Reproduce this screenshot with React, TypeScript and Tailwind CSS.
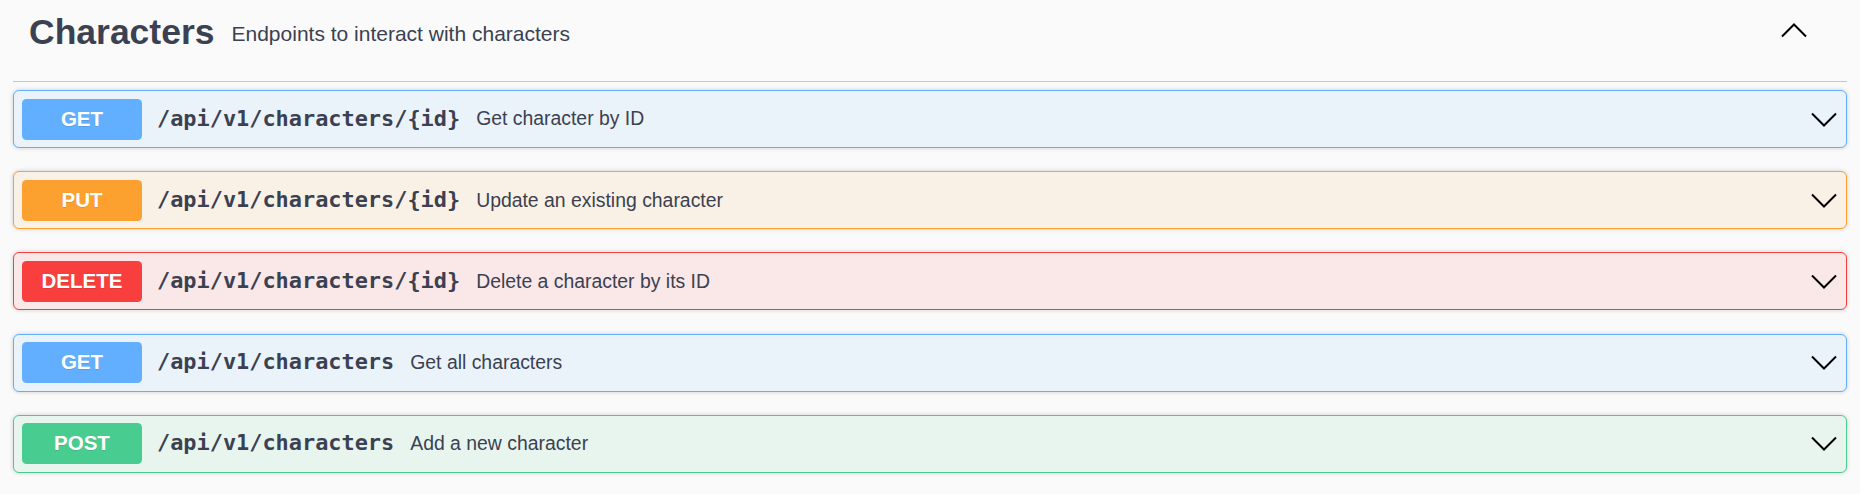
const endpoints = [
  { method: "GET", path: "/api/v1/characters/{id}", summary: "Get character by ID", kind: "get" },
  { method: "PUT", path: "/api/v1/characters/{id}", summary: "Update an existing character", kind: "put" },
  { method: "DELETE", path: "/api/v1/characters/{id}", summary: "Delete a character by its ID", kind: "delete" },
  { method: "GET", path: "/api/v1/characters", summary: "Get all characters", kind: "get" },
  { method: "POST", path: "/api/v1/characters", summary: "Add a new character", kind: "post" },
] as const;

const styles = {
  get: { block: "bg-[#ebf3fa] border-[#61affe]", badge: "bg-[#61affe]" },
  put: { block: "bg-[#faf1e6] border-[#fca130]", badge: "bg-[#fca130]" },
  delete: { block: "bg-[#fae7e7] border-[#f93e3e]", badge: "bg-[#f93e3e]" },
  post: { block: "bg-[#e8f5ef] border-[#49cc90]", badge: "bg-[#49cc90]" },
};

function Chevron({ up = false }: { up?: boolean }) {
  return (
    <svg width="26" height="15" viewBox="0 0 26 15" fill="none">
      <path
        d={up ? "M1 13.5 L13 1.5 L25 13.5" : "M1 1.5 L13 13.5 L25 1.5"}
        stroke="#000"
        strokeWidth="2"
      />
    </svg>
  );
}

export default function App() {
  return (
    <div className="min-h-[494px] w-full bg-[#fafafa] px-[13px] font-['Liberation_Sans',Arial,sans-serif] text-[#3b4151]">
      <div className="flex h-[82px] items-start border-b border-[#c4c6cb] pb-[15px]">
        <div className="flex h-[66px] flex-1 items-center pl-[16px]">
          <h3 className="text-[35.5px] font-bold leading-none">Characters</h3>
          <span className="ml-[17px] text-[21px] leading-none">Endpoints to interact with characters</span>
        </div>
        <div className="mr-[40px] mt-[23px]">
          <Chevron up />
        </div>
      </div>

      <div className="mt-[8px] flex flex-col gap-[23.2px]">
        {endpoints.map((e, i) => (
          <div
            key={i}
            className={`flex h-[58px] items-center rounded-[6px] border pl-[8px] pr-[9px] shadow-[0_0_4px_rgba(0,0,0,0.19)] ${styles[e.kind].block}`}
          >
            <div
              className={`flex h-[41px] w-[120px] items-center justify-center rounded-[4.5px] text-[20.5px] font-bold text-white [text-shadow:0_1px_0_rgba(0,0,0,0.1)] ${styles[e.kind].badge}`}
            >
              {e.method}
            </div>
            <span className="ml-[15px] font-['DejaVu_Sans_Mono',monospace] text-[21.9px] font-bold">{e.path}</span>
            <span className="ml-[16px] flex-1 text-[19.4px]">{e.summary}</span>
            <Chevron />
          </div>
        ))}
      </div>
    </div>
  );
}
